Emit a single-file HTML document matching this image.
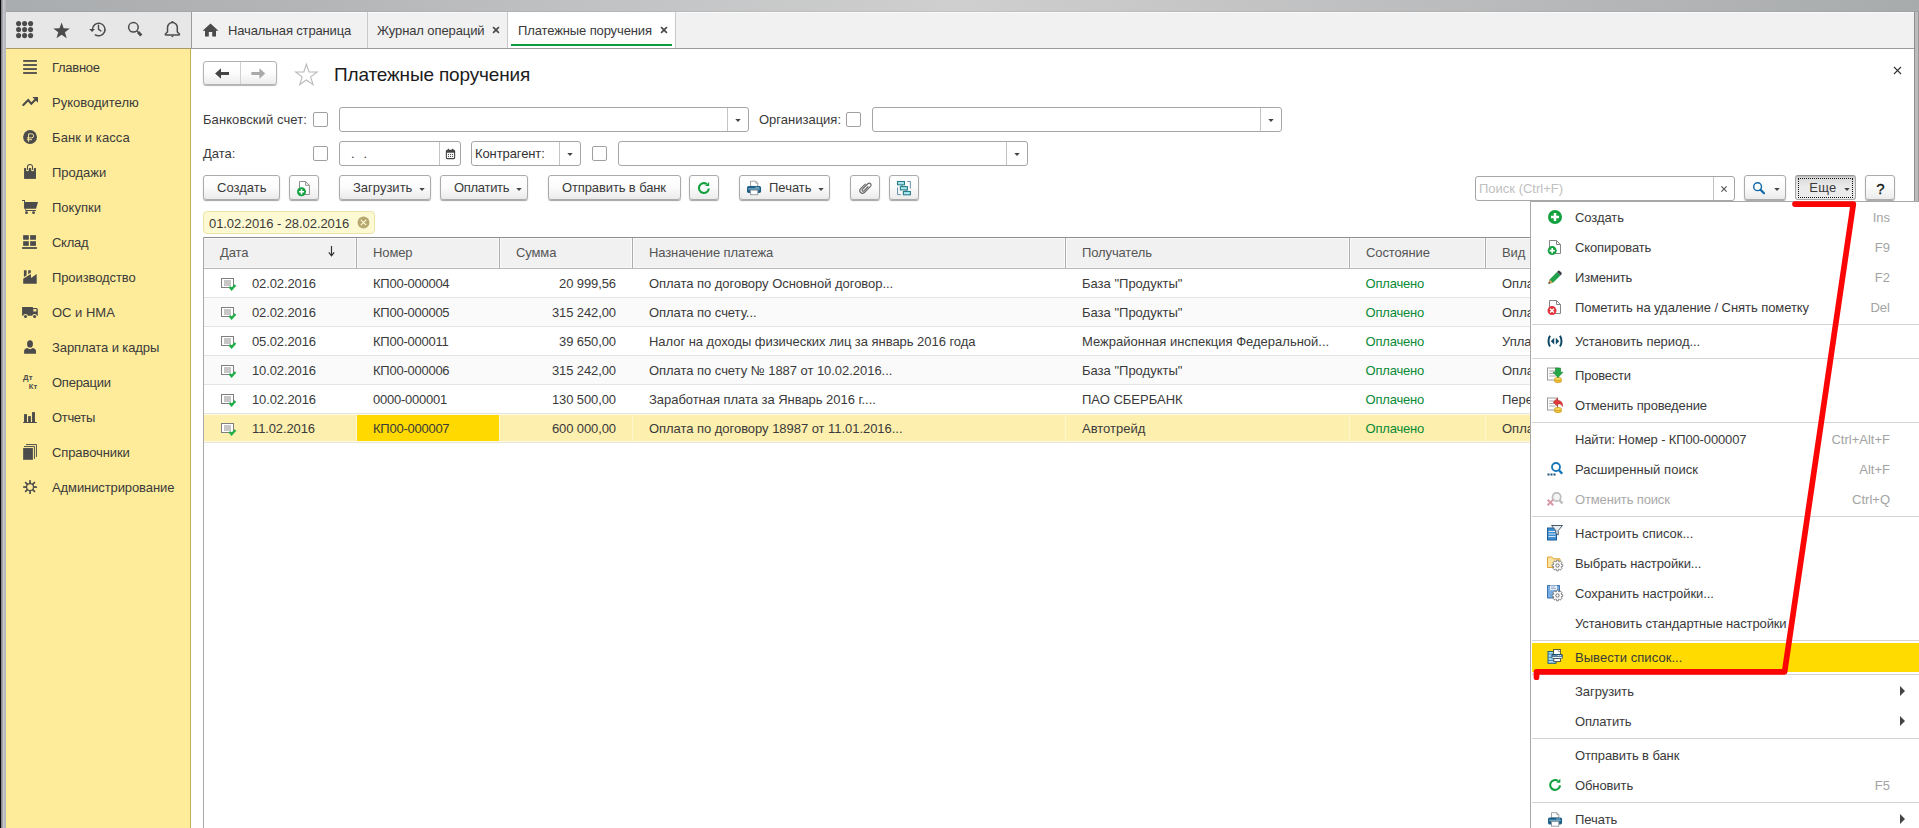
<!DOCTYPE html>
<html lang="ru">
<head>
<meta charset="utf-8">
<title>Платежные поручения</title>
<style>
*{box-sizing:border-box;margin:0;padding:0}
html,body{width:1919px;height:828px;overflow:hidden;background:#fff}
body{font-family:"Liberation Sans",sans-serif;font-size:13px;color:#3a3a3a;position:relative}
.abs{position:absolute}
.t{position:absolute;white-space:nowrap;line-height:18px;height:18px}
#topbar{left:0;top:0;width:1919px;height:12px;background:linear-gradient(90deg,#a9acae 0%,#b3b4b6 15%,#c5c6c7 36%,#cfcfcf 50%,#c9c9ca 58%,#b9babb 78%,#a8abac 100%);border-bottom:1px solid rgba(0,0,0,.06)}
#leftblack{left:0;top:0;width:1px;height:828px;background:#0a0a0a}
#leftgray{left:1px;top:0;width:5px;height:828px;background:linear-gradient(90deg,#77797d 0,#c4c5ca 50%,#b3b3b5 100%)}
#rightgray{left:1914px;top:12px;width:5px;height:190px;background:linear-gradient(90deg,#8e8e8e 0,#8e8e8e 20%,#bcbcbc 20%,#bcbcbc 80%,#9a9a9a 80%)}
#tools{left:6px;top:12px;width:185px;height:36px;background:#e7e7e7}
#tabs{left:191px;top:12px;width:1723px;height:36px;background:#f1f1f1}
#hline{left:6px;top:48px;width:1908px;height:1px;background:#9b9b9b}
#side{left:6px;top:49px;width:184px;height:779px;background:#feec9a}
#sideb{left:190px;top:49px;width:1px;height:779px;background:#c6b155}
.tabsep{top:12px;width:1px;height:36px;background:#c9c9c9}
.tabsep.first{background:#9c9c9c}
.inp{position:absolute;height:25px;border:1px solid #a6a6a6;border-radius:3px;background:#fff}
.inp .sp{position:absolute;top:0;bottom:0;width:1px;background:#c4c4c4}
.arr{position:absolute;width:0;height:0;border-left:2.6px solid transparent;border-right:2.6px solid transparent;border-top:3px solid #444}
.cb{position:absolute;width:15px;height:15px;border:1px solid #a0a0a0;border-radius:2px;background:#fff}
.btn{position:absolute;height:25px;top:175px;border:1px solid #ababab;border-radius:3px;background:linear-gradient(#ffffff 0%,#fbfbfb 50%,#ebebeb 100%);box-shadow:0 1px 1px rgba(0,0,0,.36)}
.btn .t{top:3px}
.hd{position:absolute;top:238px;height:30px;background:#f2f2f2;border-right:1px solid #c8c8c8}
.hd .t{top:7px}
.row{position:absolute;left:204px;width:1327px;height:29px;border-bottom:1px solid #e4e4e4}
.row.alt{background:#fafafa}
.row .t{top:6px}
.grn{color:#0a8a36}
#menu{left:1530px;top:201px;width:400px;height:640px;background:#fff;border-left:1px solid #a8a8a8;border-top:1px solid #a8a8a8}
.mi{position:absolute;left:1575px;line-height:18px;height:18px;white-space:nowrap}
.mk{position:absolute;line-height:18px;height:18px;white-space:nowrap;color:#a3a3a3;text-align:right;width:80px;left:1810px}
.ms{position:absolute;left:1532px;width:387px;height:1px;background:#d4d4d4}
.sub{position:absolute;left:1900px;width:0;height:0;border-top:5px solid transparent;border-bottom:5px solid transparent;border-left:5px solid #444}

#hline2{left:6px;top:48px;width:185px;height:1px;background:#a8996a}
#tabs{border-top:1px solid #fafafa}

</style>
</head>
<body>

<div class="abs" id="topbar"></div>
<div class="abs" id="tools"></div>
<div class="abs" id="tabs"></div>
<div class="abs" id="side"></div>
<div class="abs" id="sideb"></div>
<div class="abs" id="hline"></div>
<div class="abs" id="hline2"></div>
<div class="abs" id="rightgray"></div>
<div class="abs" id="leftgray"></div>
<div class="abs" id="leftblack"></div>

<svg class="abs" style="left:16px;top:21px" width="18" height="18" viewBox="0 0 18 18" ><g fill="#4b4b4b"><circle cx="2.6" cy="2.6" r="2.55"/><circle cx="2.6" cy="8.6" r="2.55"/><circle cx="2.6" cy="14.6" r="2.55"/><circle cx="8.6" cy="2.6" r="2.55"/><circle cx="8.6" cy="8.6" r="2.55"/><circle cx="8.6" cy="14.6" r="2.55"/><circle cx="14.6" cy="2.6" r="2.55"/><circle cx="14.6" cy="8.6" r="2.55"/><circle cx="14.6" cy="14.6" r="2.55"/></g></svg>
<svg class="abs" style="left:52px;top:21px" width="20" height="20" viewBox="0 0 20 20" ><polygon points="9.60,1.50 11.66,7.37 17.87,7.51 12.93,11.28 14.71,17.24 9.60,13.70 4.49,17.24 6.27,11.28 1.33,7.51 7.54,7.37" fill="#4b4b4b"/></svg>
<svg class="abs" style="left:88px;top:20px" width="20" height="20" viewBox="0 0 20 20" ><g fill="none" stroke="#4b4b4b" stroke-width="1.45">
<path d="M4.4 9.5 A6.3 6.3 0 1 1 6.9 14.55"/>
<path d="M10.5 5.3 V9.4 L12.9 10.9" stroke-width="1.4" stroke-linecap="round"/></g>
<polygon points="1.2,9 7,9 4.1,12" fill="#4b4b4b"/></svg>
<svg class="abs" style="left:126px;top:20px" width="20" height="20" viewBox="0 0 20 20" ><circle cx="7.4" cy="7.3" r="4.8" fill="none" stroke="#4b4b4b" stroke-width="1.5"/>
<path d="M11 10.9 L12 11.9" stroke="#4b4b4b" stroke-width="1.4"/>
<path d="M12 11.9 L15.3 15.4" stroke="#4b4b4b" stroke-width="2.9" stroke-linecap="butt"/></svg>
<svg class="abs" style="left:163px;top:19px" width="20" height="21" viewBox="0 0 20 21" ><path d="M4.5 13 V8.5 A4.9 5 0 0 1 14.3 8.5 V13 L16.2 14.7 Q16.9 16 15.6 16 H3.2 Q1.9 16 2.6 14.7 Z" fill="none" stroke="#4b4b4b" stroke-width="1.5" stroke-linejoin="round"/>
<circle cx="9.4" cy="3" r="1.1" fill="#4b4b4b"/>
<path d="M7.9 16.7 H10.9 L9.4 18.5 Z" fill="#4b4b4b"/></svg>
<div class="abs tabsep first" style="left:191px"></div>
<div class="abs tabsep" style="left:367px"></div>
<div class="abs tabsep" style="left:507px"></div>
<div class="abs tabsep" style="left:675px"></div>
<div class="abs" style="left:508px;top:12px;width:167px;height:36px;background:#fff"></div>
<div class="abs" style="left:511px;top:44px;width:161px;height:2px;background:#0e9b3e"></div>
<svg class="abs" style="left:202px;top:23px" width="17" height="14" viewBox="0 0 17 14" ><path d="M8.5 0.6 L0.6 7.8 H3 V13.4 H6.8 V9 H10.2 V13.4 H14 V7.8 H16.4 Z" fill="#4b4b4b"/></svg>
<div class="t" style="left:228px;top:22px;letter-spacing:-0.15px">Начальная страница</div>
<div class="t" style="left:377px;top:22px;letter-spacing:-0.1px">Журнал операций</div>
<div class="t" style="left:518px;top:22px;letter-spacing:-0.12px">Платежные поручения</div>
<svg class="abs" style="left:490.5px;top:24.5px" width="10" height="10" viewBox="0 0 10 10" ><path d="M2.1 2.1 L7.9 7.9 M7.9 2.1 L2.1 7.9" stroke="#4b4b4b" stroke-width="1.7" fill="none"/></svg>
<svg class="abs" style="left:658.5px;top:24.5px" width="10" height="10" viewBox="0 0 10 10" ><path d="M2.1 2.1 L7.9 7.9 M7.9 2.1 L2.1 7.9" stroke="#4b4b4b" stroke-width="1.7" fill="none"/></svg>
<div class="t" style="left:52px;top:59px;letter-spacing:-0.28px">Главное</div>
<div class="t" style="left:52px;top:94px;letter-spacing:0px">Руководителю</div>
<div class="t" style="left:52px;top:129px;letter-spacing:0.1px">Банк и касса</div>
<div class="t" style="left:52px;top:164px;letter-spacing:0px">Продажи</div>
<div class="t" style="left:52px;top:199px;letter-spacing:0px">Покупки</div>
<div class="t" style="left:52px;top:234px;letter-spacing:-0.28px">Склад</div>
<div class="t" style="left:52px;top:269px;letter-spacing:-0.1px">Производство</div>
<div class="t" style="left:52px;top:304px;letter-spacing:0px">ОС и НМА</div>
<div class="t" style="left:52px;top:339px;letter-spacing:-0.1px">Зарплата и кадры</div>
<div class="t" style="left:52px;top:374px;letter-spacing:-0.25px">Операции</div>
<div class="t" style="left:52px;top:409px;letter-spacing:-0.33px">Отчеты</div>
<div class="t" style="left:52px;top:444px;letter-spacing:-0.1px">Справочники</div>
<div class="t" style="left:52px;top:479px;letter-spacing:-0.1px">Администрирование</div>
<svg class="abs" style="left:21px;top:58px" width="18" height="18" viewBox="0 0 18 18" overflow="visible"><g fill="#4b4b4b"><rect x="2.15" y="2.05" width="13.75" height="1.8"/><rect x="2.15" y="6.1" width="13.75" height="1.8"/><rect x="2.15" y="10.15" width="13.75" height="1.8"/><rect x="2.15" y="14.1" width="13.75" height="1.8"/></g></svg>
<svg class="abs" style="left:21px;top:93px" width="18" height="18" viewBox="0 0 18 18" overflow="visible"><path d="M2.3 12 L7.2 7.1 L10.3 10.8 L14.6 6.6" fill="none" stroke="#4b4b4b" stroke-width="2.1" stroke-linecap="round"/><polygon points="11.4,4.1 17,4.1 17,9.8" fill="#4b4b4b"/></svg>
<svg class="abs" style="left:21px;top:128px" width="18" height="18" viewBox="0 0 18 18" overflow="visible"><circle cx="9.05" cy="9.05" r="6.95" fill="#4b4b4b"/><path d="M7.6 13.8 V5.85 H10.6 A2 2 0 0 1 10.6 9.85 H5.9 M5.9 11.7 H11" fill="none" stroke="#feec9a" stroke-width="0.95"/></svg>
<svg class="abs" style="left:21px;top:163px" width="18" height="18" viewBox="0 0 18 18" overflow="visible"><rect x="3.06" y="5.05" width="11.9" height="10.85" fill="#4b4b4b"/><path d="M6.45 4.6 V6.9 M11.55 4.6 V6.9" stroke="#feec9a" stroke-width="2.7" stroke-linecap="round"/><path d="M6.45 7 V3.9 A2.55 2.4 0 0 1 11.55 3.9 V7" fill="none" stroke="#4b4b4b" stroke-width="1.05"/></svg>
<svg class="abs" style="left:21px;top:198px" width="18" height="18" viewBox="0 0 18 18" overflow="visible"><path d="M1.1 2 H4 V3.95 H17 L15 10.7 H3.06 V3 H1.1 Z" fill="#4b4b4b"/><path d="M4.3 10.7 H5.1 V12 H14.9 V12.9 H4.3 Z" fill="#4b4b4b"/><circle cx="5.5" cy="14.7" r="1.4" fill="#4b4b4b"/><circle cx="12.55" cy="14.7" r="1.4" fill="#4b4b4b"/></svg>
<svg class="abs" style="left:21px;top:233px" width="18" height="18" viewBox="0 0 18 18" overflow="visible"><g fill="#4b4b4b"><rect x="2.15" y="2.15" width="5.65" height="4.6"/><rect x="9.15" y="2.15" width="5.8" height="4.6"/><rect x="2.15" y="8.2" width="5.65" height="4.65"/><rect x="9.15" y="8.2" width="5.8" height="4.65"/><rect x="1.07" y="14.1" width="14.85" height="1.8"/></g></svg>
<svg class="abs" style="left:21px;top:268px" width="18" height="18" viewBox="0 0 18 18" overflow="visible"><path d="M2.2 15.7 V10.8 L9.8 6.1 L10.1 9.9 L15.7 5.9 V15.7 Z M2.9 2.2 H5.6 V7.2 L2.9 8.9 Z M7.2 2.2 H9.9 V4.5 L7.2 6.2 Z" fill="#4b4b4b"/></svg>
<svg class="abs" style="left:21px;top:303px" width="18" height="18" viewBox="0 0 18 18" overflow="visible"><path d="M1.1 4 H11.9 V5 H15.4 Q16.8 5 16.8 6.6 V12.7 H1.1 Z" fill="#4b4b4b"/><rect x="12.3" y="6.1" width="3.1" height="2.4" fill="#feec9a"/><circle cx="4.5" cy="13.4" r="2.4" fill="#feec9a"/><circle cx="13.6" cy="13.4" r="2.4" fill="#feec9a"/><circle cx="4.5" cy="13.4" r="1.5" fill="#4b4b4b"/><circle cx="13.6" cy="13.4" r="1.5" fill="#4b4b4b"/></svg>
<svg class="abs" style="left:21px;top:338px" width="18" height="18" viewBox="0 0 18 18" overflow="visible"><ellipse cx="9" cy="5.9" rx="2.95" ry="3.7" fill="#4b4b4b"/><path d="M3.1 15.7 V13.2 Q3.1 10.8 6.2 10.1 Q9 12.2 11.8 10.1 Q15 10.8 15 13.2 V15.7 Z" fill="#4b4b4b"/></svg>
<svg class="abs" style="left:21px;top:373px" width="18" height="18" viewBox="0 0 18 18" overflow="visible"><text x="2.1" y="7" font-family="Liberation Sans" font-size="7.8" font-weight="bold" fill="#4b4b4b">Дт</text><text x="7.8" y="15.5" font-family="Liberation Sans" font-size="7.6" font-weight="bold" fill="#4b4b4b">Кт</text></svg>
<svg class="abs" style="left:21px;top:408px" width="18" height="18" viewBox="0 0 18 18" overflow="visible"><g fill="#4b4b4b"><rect x="3.05" y="6.1" width="2.9" height="8.2"/><rect x="7.1" y="8.1" width="2.8" height="6.2"/><rect x="11.05" y="4.1" width="2.9" height="10.2"/><rect x="2.15" y="14" width="13.75" height="1"/></g></svg>
<svg class="abs" style="left:21px;top:443px" width="18" height="18" viewBox="0 0 18 18" overflow="visible"><path d="M5.05 1.55 H15.45 V13.9" fill="none" stroke="#4b4b4b" stroke-width="0.95"/><path d="M3.06 3.55 H13.45 V15.9" fill="none" stroke="#4b4b4b" stroke-width="0.95"/><rect x="2.15" y="5.05" width="9.75" height="11.75" fill="#4b4b4b"/></svg>
<svg class="abs" style="left:21px;top:478px" width="18" height="18" viewBox="0 0 18 18" overflow="visible"><rect x="8.2" y="2.15" width="1.7" height="13.8" transform="rotate(0 9.05 9.05)" fill="#4b4b4b"/><rect x="8.2" y="2.15" width="1.7" height="13.8" transform="rotate(45 9.05 9.05)" fill="#4b4b4b"/><rect x="8.2" y="2.15" width="1.7" height="13.8" transform="rotate(90 9.05 9.05)" fill="#4b4b4b"/><rect x="8.2" y="2.15" width="1.7" height="13.8" transform="rotate(135 9.05 9.05)" fill="#4b4b4b"/><circle cx="9.05" cy="9.05" r="4.1" fill="#4b4b4b"/><circle cx="9.05" cy="9.05" r="2.85" fill="#feec9a"/></svg>
<div class="abs" style="left:203px;top:61px;width:74px;height:24px;border:1px solid #b3b3b3;border-radius:3px;background:linear-gradient(#fff,#fdfdfd 50%,#ececec);box-shadow:0 1px 1px rgba(0,0,0,.3)"></div>
<div class="abs" style="left:240px;top:62px;width:1px;height:22px;background:#d0d0d0"></div>
<svg class="abs" style="left:215px;top:68.0px" width="15" height="11" viewBox="0 -0.5 15 11" ><path d="M14 3.6 H6 V-0.2 L0.1 5 L6 10.2 V6.6 H14 Z" fill="#454545"/></svg>
<svg class="abs" style="left:251px;top:68.0px" width="15" height="11" viewBox="0 -0.5 15 11" ><path d="M14 3.6 H6 V-0.2 L0.1 5 L6 10.2 V6.6 H14 Z" fill="#a9a9a9" transform="translate(14.4 0) scale(-1 1)"/></svg>
<svg class="abs" style="left:293px;top:62px" width="27" height="25" viewBox="0 0 27 25" ><polygon points="13.40,2.20 16.02,9.90 24.15,10.01 17.63,14.88 20.04,22.64 13.40,17.95 6.76,22.64 9.17,14.88 2.65,10.01 10.78,9.90" fill="#fff" stroke="#b9b9b9" stroke-width="1.1" stroke-linejoin="miter"/></svg>
<div class="t" style="left:334px;top:63px;font-size:19px;line-height:24px;height:24px;color:#1c1c1c;letter-spacing:-0.15px">Платежные поручения</div>
<svg class="abs" style="left:1892px;top:65px" width="11" height="11" viewBox="0 0 11 11" ><path d="M2 2 L9 9 M9 2 L2 9" stroke="#333" stroke-width="1.1" fill="none"/></svg>
<div class="t" style="left:203px;top:111px;letter-spacing:0.08px">Банковский счет:</div>
<div class="cb" style="left:313px;top:112px"></div>
<div class="inp" style="left:339px;top:107px;width:410px;height:25px"><div class="sp" style="left:387px"></div></div>
<svg class="abs" style="left:733.5px;top:117.5px" width="8" height="5" viewBox="0 0 8 5" ><polygon points="1.3,1 6.7,1 4,3.9" fill="#444"/></svg>
<div class="t" style="left:759px;top:111px">Организация:</div>
<div class="cb" style="left:846px;top:112px"></div>
<div class="inp" style="left:872px;top:107px;width:410px;height:25px"><div class="sp" style="left:387px"></div></div>
<svg class="abs" style="left:1266.5px;top:117.5px" width="8" height="5" viewBox="0 0 8 5" ><polygon points="1.3,1 6.7,1 4,3.9" fill="#444"/></svg>
<div class="t" style="left:203px;top:145px">Дата:</div>
<div class="cb" style="left:313px;top:146px"></div>
<div class="inp" style="left:339px;top:141px;width:122px;height:25px"><div class="sp" style="left:99px"></div></div>
<div class="t" style="left:351px;top:145px;letter-spacing:9px">..</div>
<svg class="abs" style="left:444.5px;top:147.5px" width="11" height="12" viewBox="0 0 12 13" ><rect x="1.5" y="2.5" width="9" height="9" rx="1" fill="#fff" stroke="#444" stroke-width="1.2"/><rect x="1.5" y="2.5" width="9" height="2.6" fill="#444"/><rect x="3" y="0.8" width="1.4" height="2.6" fill="#444"/><rect x="7.6" y="0.8" width="1.4" height="2.6" fill="#444"/><g fill="#555"><rect x="3.2" y="6.4" width="1.2" height="1.2"/><rect x="5.4" y="6.4" width="1.2" height="1.2"/><rect x="7.6" y="6.4" width="1.2" height="1.2"/><rect x="3.2" y="8.6" width="1.2" height="1.2"/><rect x="5.4" y="8.6" width="1.2" height="1.2"/><rect x="7.6" y="8.6" width="1.2" height="1.2"/></g></svg>
<div class="inp" style="left:471px;top:141px;width:110px;height:25px"><div class="sp" style="left:87px"></div></div>
<svg class="abs" style="left:565.5px;top:151.5px" width="8" height="5" viewBox="0 0 8 5" ><polygon points="1.3,1 6.7,1 4,3.9" fill="#444"/></svg>
<div class="t" style="left:475px;top:145px;color:#333;letter-spacing:-0.1px">Контрагент:</div>
<div class="cb" style="left:592px;top:146px"></div>
<div class="inp" style="left:618px;top:141px;width:410px;height:25px"><div class="sp" style="left:387px"></div></div>
<svg class="abs" style="left:1012.5px;top:151.5px" width="8" height="5" viewBox="0 0 8 5" ><polygon points="1.3,1 6.7,1 4,3.9" fill="#444"/></svg>
<div class="btn" style="left:203px;width:77px;"><div class="t" style="left:13px;letter-spacing:0px">Создать</div></div>
<div class="btn" style="left:289px;width:30px;"></div>
<div class="btn" style="left:339px;width:92px;"><div class="t" style="left:13px;letter-spacing:0px">Загрузить</div></div>
<svg class="abs" style="left:417.5px;top:186.5px" width="8" height="5" viewBox="0 0 8 5" ><polygon points="1.3,1 6.7,1 4,3.9" fill="#444"/></svg>
<div class="btn" style="left:440px;width:88px;"><div class="t" style="left:13px;letter-spacing:-0.3px">Оплатить</div></div>
<svg class="abs" style="left:514.5px;top:186.5px" width="8" height="5" viewBox="0 0 8 5" ><polygon points="1.3,1 6.7,1 4,3.9" fill="#444"/></svg>
<div class="btn" style="left:548px;width:133px;"><div class="t" style="left:13px;letter-spacing:-0.12px">Отправить в банк</div></div>
<div class="btn" style="left:689px;width:30px;"></div>
<div class="btn" style="left:739px;width:91px;"><div class="t" style="left:29px;letter-spacing:0px">Печать</div></div>
<svg class="abs" style="left:816.5px;top:186.5px" width="8" height="5" viewBox="0 0 8 5" ><polygon points="1.3,1 6.7,1 4,3.9" fill="#444"/></svg>
<div class="btn" style="left:850px;width:30px;"></div>
<div class="btn" style="left:889px;width:30px;"></div>
<div class="inp" style="left:1475px;top:176px;width:260px;height:25px"><div class="sp" style="left:237px"></div></div>
<div class="t" style="left:1479px;top:180px;color:#c0c0c0">Поиск (Ctrl+F)</div>
<svg class="abs" style="left:1718.5px;top:183.5px" width="10" height="10" viewBox="0 0 10 10" ><path d="M2.4 2.4 L7.6 7.6 M7.6 2.4 L2.4 7.6" stroke="#555" stroke-width="1.2" fill="none"/></svg>
<div class="btn" style="left:1744px;width:42px;"></div>
<svg class="abs" style="left:1772.5px;top:186.5px" width="8" height="5" viewBox="0 0 8 5" ><polygon points="1.3,1 6.7,1 4,3.9" fill="#444"/></svg>
<div class="btn" style="left:1795px;width:61px;background:linear-gradient(#d6d6d6,#eaeaea 45%,#ececec);border-color:#a6a6a6;border-top-color:#969696;box-shadow:inset 0 1px 1px rgba(0,0,0,.12)"><div class="t" style="left:13.299999999999955px;letter-spacing:0.3px">Еще</div></div>
<svg class="abs" style="left:1842.5px;top:186.5px" width="8" height="5" viewBox="0 0 8 5" ><polygon points="1.3,1 6.7,1 4,3.9" fill="#444"/></svg>
<div class="abs" style="left:1798px;top:178px;width:55px;height:20px;border:1px dotted #111"></div>
<div class="btn" style="left:1865px;width:30px;"></div>
<div class="t" style="left:1876.2px;top:180px;font-size:15px;color:#111;-webkit-text-stroke:0.3px #111">?</div>
<div class="abs" style="left:203px;top:211px;width:172px;height:23px;background:#fdf9d2;border:1px solid #ebe3aa;border-radius:4px"></div>
<div class="t" style="left:209px;top:215px;letter-spacing:-0.07px">01.02.2016 - 28.02.2016</div>
<svg class="abs" style="left:356.6px;top:215.6px" width="13" height="13" viewBox="0 0 13 13" ><circle cx="6.5" cy="6.5" r="5.9" fill="#b7a771"/><path d="M3.8 3.8 L9.2 9.2 M9.2 3.8 L3.8 9.2" stroke="#fdf9d2" stroke-width="1.2"/></svg>
<svg class="abs" style="left:296px;top:180px" width="16" height="17" viewBox="0 0 16 17" ><path d="M3.5 1.5 H9.6 L13.4 5.3 V14.5 H3.5 Z" fill="#fff" stroke="#8e8e8e" stroke-width="1"/><path d="M9.6 1.5 V5.3 H13.4" fill="none" stroke="#8e8e8e" stroke-width="1"/><circle cx="5.5" cy="11.8" r="4.5" fill="#12a13f"/><path d="M2.9 11.8 H8.1 M5.5 9.2 V14.4" stroke="#fff" stroke-width="1.5"/></svg>
<svg class="abs" style="left:696px;top:180px" width="17" height="18" viewBox="0 0 17 18" ><path d="M10.74 3.99 A4.95 4.95 0 1 0 12.83 8.47" fill="none" stroke="#12a03e" stroke-width="2.1"/><polygon points="13.1,1.9 13.1,5.9 9.1,5.9" fill="#12a03e"/></svg>
<svg class="abs" style="left:746px;top:180px" width="17" height="16" viewBox="0 0 17 16" ><path d="M4.5 1.2 H9.8 L11.8 3.2 V6.4 H4.5 Z" fill="#fff" stroke="#9a9a9a" stroke-width="0.9"/><path d="M9.8 1.2 V3.2 H11.8" fill="none" stroke="#9a9a9a" stroke-width="0.8"/><rect x="1" y="6.1" width="14.05" height="6.8" rx="1.6" fill="#1f5f86"/><rect x="2.2" y="8.2" width="11.6" height="1.4" fill="#6fa8c8"/><rect x="9.6" y="6.9" width="1" height="1" fill="#d9ecf7"/><rect x="11.6" y="6.9" width="1" height="1" fill="#d9ecf7"/><rect x="4.5" y="10.1" width="7.3" height="4.6" fill="#fff" stroke="#8e979c" stroke-width="0.9"/></svg>
<svg class="abs" style="left:857px;top:180px" width="16" height="16" viewBox="0 0 16 16" ><g transform="rotate(45 8 8)"><path d="M5.4 5 V11.6 A2.7 2.7 0 0 0 10.8 11.6 V3 A1.9 1.9 0 0 0 7 3 V10.8 A1.1 1.1 0 0 0 9.2 10.8 V5" fill="none" stroke="#6a6a6a" stroke-width="1.15" stroke-linecap="round"/></g></svg>
<svg class="abs" style="left:896px;top:180px" width="17" height="16" viewBox="0 0 17 16" ><path d="M6 4.8 V6.6 M10 9.8 V11.6" stroke="#2a7f86" stroke-width="1"/><g fill="#a9e6ee" stroke="#2a7f86" stroke-width="1.1"><rect x="1.5" y="1.5" width="7" height="3.3"/><rect x="4.4" y="6.6" width="7" height="3.3"/><rect x="7.4" y="11.5" width="7" height="3.3"/></g><path d="M11.2 1.5 H14.4 V8.6 M1.5 7.4 V14.6 H4.8" fill="none" stroke="#5b88a6" stroke-width="0.9"/></svg>
<svg class="abs" style="left:1752px;top:181px" width="15" height="14" viewBox="0 0 15 14" ><circle cx="5.6" cy="5.7" r="3.9" fill="#fff" stroke="#0f66a5" stroke-width="1.45"/><path d="M8.5 8.7 L12 12.2" stroke="#0f66a5" stroke-width="2.1" stroke-linecap="round"/></svg>
<div class="abs" style="left:203px;top:237px;width:1329px;height:1px;background:#8e8e8e"></div>
<div class="abs" style="left:203px;top:237px;width:1px;height:591px;background:#a9a9a9"></div>
<div class="abs" style="left:204px;top:238px;width:1327px;height:31px;background:#f1f1f1;border-bottom:1px solid #b9b9b9;box-shadow:inset 0 1px 0 #fafafa,inset 0 -1px 0 #f8f8f8"></div>
<div class="abs" style="left:355px;top:238px;width:1px;height:30px;background:#fbfbfb"></div>
<div class="abs" style="left:356px;top:238px;width:1px;height:30px;background:#adadad"></div>
<div class="abs" style="left:357px;top:238px;width:1px;height:30px;background:#fbfbfb"></div>
<div class="abs" style="left:498px;top:238px;width:1px;height:30px;background:#fbfbfb"></div>
<div class="abs" style="left:499px;top:238px;width:1px;height:30px;background:#adadad"></div>
<div class="abs" style="left:500px;top:238px;width:1px;height:30px;background:#fbfbfb"></div>
<div class="abs" style="left:631px;top:238px;width:1px;height:30px;background:#fbfbfb"></div>
<div class="abs" style="left:632px;top:238px;width:1px;height:30px;background:#adadad"></div>
<div class="abs" style="left:633px;top:238px;width:1px;height:30px;background:#fbfbfb"></div>
<div class="abs" style="left:1064px;top:238px;width:1px;height:30px;background:#fbfbfb"></div>
<div class="abs" style="left:1065px;top:238px;width:1px;height:30px;background:#adadad"></div>
<div class="abs" style="left:1066px;top:238px;width:1px;height:30px;background:#fbfbfb"></div>
<div class="abs" style="left:1348px;top:238px;width:1px;height:30px;background:#fbfbfb"></div>
<div class="abs" style="left:1349px;top:238px;width:1px;height:30px;background:#adadad"></div>
<div class="abs" style="left:1350px;top:238px;width:1px;height:30px;background:#fbfbfb"></div>
<div class="abs" style="left:1484px;top:238px;width:1px;height:30px;background:#fbfbfb"></div>
<div class="abs" style="left:1485px;top:238px;width:1px;height:30px;background:#adadad"></div>
<div class="abs" style="left:1486px;top:238px;width:1px;height:30px;background:#fbfbfb"></div>
<div class="t" style="left:220px;top:244px;color:#555;letter-spacing:-0.12px">Дата</div>
<div class="t" style="left:373px;top:244px;color:#555;letter-spacing:-0.12px">Номер</div>
<div class="t" style="left:516px;top:244px;color:#555;letter-spacing:-0.12px">Сумма</div>
<div class="t" style="left:649px;top:244px;color:#555;letter-spacing:-0.12px">Назначение платежа</div>
<div class="t" style="left:1082px;top:244px;color:#555;letter-spacing:-0.12px">Получатель</div>
<div class="t" style="left:1366px;top:244px;color:#555;letter-spacing:-0.12px">Состояние</div>
<div class="t" style="left:1502px;top:244px;color:#555;letter-spacing:-0.12px">Вид</div>
<svg class="abs" style="left:327px;top:245px" width="9" height="12" viewBox="0 0 9 12" ><path d="M4.5 1 V10.5 M1.8 7.4 L4.5 10.8 L7.2 7.4" fill="none" stroke="#333" stroke-width="1.2"/></svg>
<div class="row" style="top:269px;"><div class="t" style="left:48px;letter-spacing:-0.12px">02.02.2016</div><div class="t" style="left:169px;letter-spacing:-0.25px">КП00-000004</div><div class="t" style="left:312px;width:100px;text-align:right;letter-spacing:-0.1px">20 999,56</div><div class="t" style="left:445px;letter-spacing:-0.04px">Оплата по договору Основной договор...</div><div class="t" style="left:878px">База "Продукты"</div><div class="t grn" style="left:1161.5px;letter-spacing:-0.2px">Оплачено</div><div class="t" style="left:1298px">Опла</div></div>
<svg class="abs" style="left:221px;top:277px" width="16" height="14" viewBox="0 0 16 14" ><rect x="0.5" y="1.5" width="12" height="9" fill="#fff" stroke="#7f7f7f" stroke-width="1"/>
<path d="M3 4 H10 M3 6 H10 M3 8 H10" stroke="#8e8e8e" stroke-width="1"/>
<path d="M8.4 9.8 L10.6 12.2 L14.4 8" fill="none" stroke="#1fae47" stroke-width="2.3"/></svg>
<div class="row alt" style="top:298px;"><div class="t" style="left:48px;letter-spacing:-0.12px">02.02.2016</div><div class="t" style="left:169px;letter-spacing:-0.25px">КП00-000005</div><div class="t" style="left:312px;width:100px;text-align:right;letter-spacing:-0.1px">315 242,00</div><div class="t" style="left:445px;letter-spacing:-0.04px">Оплата по счету...</div><div class="t" style="left:878px">База "Продукты"</div><div class="t grn" style="left:1161.5px;letter-spacing:-0.2px">Оплачено</div><div class="t" style="left:1298px">Опла</div></div>
<svg class="abs" style="left:221px;top:306px" width="16" height="14" viewBox="0 0 16 14" ><rect x="0.5" y="1.5" width="12" height="9" fill="#fff" stroke="#7f7f7f" stroke-width="1"/>
<path d="M3 4 H10 M3 6 H10 M3 8 H10" stroke="#8e8e8e" stroke-width="1"/>
<path d="M8.4 9.8 L10.6 12.2 L14.4 8" fill="none" stroke="#1fae47" stroke-width="2.3"/></svg>
<div class="row" style="top:327px;"><div class="t" style="left:48px;letter-spacing:-0.12px">05.02.2016</div><div class="t" style="left:169px;letter-spacing:-0.25px">КП00-000011</div><div class="t" style="left:312px;width:100px;text-align:right;letter-spacing:-0.1px">39 650,00</div><div class="t" style="left:445px;letter-spacing:-0.04px">Налог на доходы физических лиц за январь 2016 года</div><div class="t" style="left:878px">Межрайонная инспекция Федеральной...</div><div class="t grn" style="left:1161.5px;letter-spacing:-0.2px">Оплачено</div><div class="t" style="left:1298px">Упла</div></div>
<svg class="abs" style="left:221px;top:335px" width="16" height="14" viewBox="0 0 16 14" ><rect x="0.5" y="1.5" width="12" height="9" fill="#fff" stroke="#7f7f7f" stroke-width="1"/>
<path d="M3 4 H10 M3 6 H10 M3 8 H10" stroke="#8e8e8e" stroke-width="1"/>
<path d="M8.4 9.8 L10.6 12.2 L14.4 8" fill="none" stroke="#1fae47" stroke-width="2.3"/></svg>
<div class="row alt" style="top:356px;"><div class="t" style="left:48px;letter-spacing:-0.12px">10.02.2016</div><div class="t" style="left:169px;letter-spacing:-0.25px">КП00-000006</div><div class="t" style="left:312px;width:100px;text-align:right;letter-spacing:-0.1px">315 242,00</div><div class="t" style="left:445px;letter-spacing:-0.04px">Оплата по счету № 1887 от 10.02.2016...</div><div class="t" style="left:878px">База "Продукты"</div><div class="t grn" style="left:1161.5px;letter-spacing:-0.2px">Оплачено</div><div class="t" style="left:1298px">Опла</div></div>
<svg class="abs" style="left:221px;top:364px" width="16" height="14" viewBox="0 0 16 14" ><rect x="0.5" y="1.5" width="12" height="9" fill="#fff" stroke="#7f7f7f" stroke-width="1"/>
<path d="M3 4 H10 M3 6 H10 M3 8 H10" stroke="#8e8e8e" stroke-width="1"/>
<path d="M8.4 9.8 L10.6 12.2 L14.4 8" fill="none" stroke="#1fae47" stroke-width="2.3"/></svg>
<div class="row" style="top:385px;"><div class="t" style="left:48px;letter-spacing:-0.12px">10.02.2016</div><div class="t" style="left:169px;letter-spacing:-0.25px">0000-000001</div><div class="t" style="left:312px;width:100px;text-align:right;letter-spacing:-0.1px">130 500,00</div><div class="t" style="left:445px;letter-spacing:-0.04px">Заработная плата за Январь 2016 г....</div><div class="t" style="left:878px">ПАО СБЕРБАНК</div><div class="t grn" style="left:1161.5px;letter-spacing:-0.2px">Оплачено</div><div class="t" style="left:1298px">Пере</div></div>
<svg class="abs" style="left:221px;top:393px" width="16" height="14" viewBox="0 0 16 14" ><rect x="0.5" y="1.5" width="12" height="9" fill="#fff" stroke="#7f7f7f" stroke-width="1"/>
<path d="M3 4 H10 M3 6 H10 M3 8 H10" stroke="#8e8e8e" stroke-width="1"/>
<path d="M8.4 9.8 L10.6 12.2 L14.4 8" fill="none" stroke="#1fae47" stroke-width="2.3"/></svg>
<div class="row alt" style="top:414px;background:#fdefae;border-bottom-color:#e9e6d8;box-shadow:inset 0 1px 0 #fffae0,inset 0 -1px 0 #fffae0;"><div class="abs" style="left:153px;top:1px;width:142px;height:26px;background:#ffd900"></div><div class="abs" style="left:152px;top:0;width:1px;height:28px;background:#fff6d0"></div><div class="abs" style="left:295px;top:0;width:1px;height:28px;background:#fff6d0"></div><div class="abs" style="left:428px;top:0;width:1px;height:28px;background:#fff6d0"></div><div class="abs" style="left:861px;top:0;width:1px;height:28px;background:#fff6d0"></div><div class="abs" style="left:1145px;top:0;width:1px;height:28px;background:#fff6d0"></div><div class="abs" style="left:1281px;top:0;width:1px;height:28px;background:#fff6d0"></div><div class="t" style="left:48px;letter-spacing:-0.12px">11.02.2016</div><div class="t" style="left:169px;letter-spacing:-0.25px">КП00-000007</div><div class="t" style="left:312px;width:100px;text-align:right;letter-spacing:-0.1px">600 000,00</div><div class="t" style="left:445px;letter-spacing:-0.04px">Оплата по договору 18987 от 11.01.2016...</div><div class="t" style="left:878px">Автотрейд</div><div class="t grn" style="left:1161.5px;letter-spacing:-0.2px">Оплачено</div><div class="t" style="left:1298px">Опла</div></div>
<svg class="abs" style="left:221px;top:422px" width="16" height="14" viewBox="0 0 16 14" ><rect x="0.5" y="1.5" width="12" height="9" fill="#fff" stroke="#7f7f7f" stroke-width="1"/>
<path d="M3 4 H10 M3 6 H10 M3 8 H10" stroke="#8e8e8e" stroke-width="1"/>
<path d="M8.4 9.8 L10.6 12.2 L14.4 8" fill="none" stroke="#1fae47" stroke-width="2.3"/></svg>
<div class="abs" id="menu"></div>
<div class="abs" style="left:1532px;top:643px;width:387px;height:29px;background:#ffdb00"></div>
<div class="mi" style="top:209px;letter-spacing:-0.08px">Создать</div>
<div class="mk" style="top:209px">Ins</div>
<div class="mi" style="top:239px;letter-spacing:-0.13px">Скопировать</div>
<div class="mk" style="top:239px">F9</div>
<div class="mi" style="top:269px;letter-spacing:-0.18px">Изменить</div>
<div class="mk" style="top:269px">F2</div>
<div class="mi" style="top:299px;letter-spacing:-0.065px">Пометить на удаление / Снять пометку</div>
<div class="mk" style="top:299px">Del</div>
<div class="mi" style="top:333px;letter-spacing:-0.04px">Установить период...</div>
<div class="mi" style="top:367px;letter-spacing:-0.2px">Провести</div>
<div class="mi" style="top:397px;letter-spacing:-0.15px">Отменить проведение</div>
<div class="mi" style="top:431px;letter-spacing:-0.14px">Найти: Номер - КП00-000007</div>
<div class="mk" style="top:431px">Ctrl+Alt+F</div>
<div class="mi" style="top:461px;letter-spacing:0.03px">Расширенный поиск</div>
<div class="mk" style="top:461px">Alt+F</div>
<div class="mi" style="top:491px;color:#a9a9a9;letter-spacing:-0.14px">Отменить поиск</div>
<div class="mk" style="top:491px">Ctrl+Q</div>
<div class="mi" style="top:525px;letter-spacing:0px">Настроить список...</div>
<div class="mi" style="top:555px;letter-spacing:-0.1px">Выбрать настройки...</div>
<div class="mi" style="top:585px;letter-spacing:-0.08px">Сохранить настройки...</div>
<div class="mi" style="top:615px;letter-spacing:-0.115px">Установить стандартные настройки</div>
<div class="mi" style="top:649px;letter-spacing:0.05px">Вывести список...</div>
<div class="mi" style="top:683px;letter-spacing:-0.05px">Загрузить</div>
<div class="sub" style="top:686px"></div>
<div class="mi" style="top:713px;letter-spacing:-0.15px">Оплатить</div>
<div class="sub" style="top:716px"></div>
<div class="mi" style="top:747px;letter-spacing:-0.1px">Отправить в банк</div>
<div class="mi" style="top:777px;letter-spacing:-0.1px">Обновить</div>
<div class="mk" style="top:777px">F5</div>
<div class="mi" style="top:811px;letter-spacing:-0.05px">Печать</div>
<div class="sub" style="top:814px"></div>
<div class="ms" style="top:324px"></div>
<div class="ms" style="top:358px"></div>
<div class="ms" style="top:422px"></div>
<div class="ms" style="top:516px"></div>
<div class="ms" style="top:640px"></div>
<div class="ms" style="top:674px"></div>
<div class="ms" style="top:738px"></div>
<div class="ms" style="top:802px"></div>
<svg class="abs" style="left:1546px;top:208px" width="18" height="18" viewBox="0 0 18 18" ><circle cx="9" cy="9" r="7" fill="#12a13f"/><path d="M4.94 9 H13.059999999999999 M9 4.94 V13.059999999999999" stroke="#fff" stroke-width="2.52"/></svg>
<svg class="abs" style="left:1546px;top:238px" width="18" height="18" viewBox="0 0 18 18" ><path d="M3.5 2.5 H10.5 L14.5 6.5 V15.5 H3.5 Z" fill="#fff" stroke="#858585" stroke-width="1"/><path d="M10.5 2.5 V6.5 H14.5" fill="none" stroke="#858585" stroke-width="1"/><circle cx="6.2" cy="12.6" r="4.5" fill="#12a13f"/><path d="M3.5900000000000003 12.6 H8.81 M6.2 9.99 V15.209999999999999" stroke="#fff" stroke-width="1.62"/></svg>
<svg class="abs" style="left:1546px;top:268px" width="18" height="18" viewBox="0 0 18 18" ><g transform="translate(-0.6 0.8)"><path d="M3 15 L4.2 10.6 L11.6 3.2 L15 6.6 L7.6 14 Z" fill="#23a04a"/><path d="M11.6 3.2 L12.8 2 Q13.6 1.4 14.4 2.2 L16 3.8 Q16.8 4.6 16.2 5.4 L15 6.6 Z" fill="#39404a"/><path d="M3 15 L4.2 10.6 L7.6 14 Z" fill="#d9a05a"/><path d="M3 15 L3.6 13 L5 14.4 Z" fill="#333"/></g></svg>
<svg class="abs" style="left:1546px;top:298px" width="18" height="18" viewBox="0 0 18 18" ><path d="M3.5 2.5 H10.5 L14.5 6.5 V15.5 H3.5 Z" fill="#fff" stroke="#858585" stroke-width="1"/><path d="M10.5 2.5 V6.5 H14.5" fill="none" stroke="#858585" stroke-width="1"/><circle cx="6" cy="12.6" r="4.5" fill="#e2323a"/><path d="M4.1 10.7 L7.9 14.5 M7.9 10.7 L4.1 14.5" stroke="#fff" stroke-width="1.5"/></svg>
<svg class="abs" style="left:1546px;top:332px" width="18" height="18" viewBox="0 0 18 18" ><path d="M4 3.8 Q1 9.2 4 14.6 M14 3.8 Q17 9.2 14 14.6" fill="none" stroke="#0d4a66" stroke-width="2"/><path d="M8.2 5.8 L4.8 9.2 L8.2 12.6 Z M9.8 5.8 L13.2 9.2 L9.8 12.6 Z" fill="#0d4a66"/></svg>
<svg class="abs" style="left:1546px;top:366px" width="18" height="18" viewBox="0 0 18 18" ><rect x="1.5" y="2" width="10" height="12" fill="#fff" stroke="#9a9a9a" stroke-width="1"/><path d="M3.2 5 H9.8 M3.2 7.5 H9.8 M3.2 10 H9.8" stroke="#a8a8a8" stroke-width="1"/><ellipse cx="12" cy="15" rx="3.6" ry="1.6" fill="#f3c63a" stroke="#c9971a" stroke-width="0.7"/><ellipse cx="12" cy="13" rx="3.6" ry="1.6" fill="#f7d558" stroke="#c9971a" stroke-width="0.7"/><path d="M9.5 2 H14.5 V6.2 H17 L12 11.4 L7 6.2 H9.5 Z" fill="#22a845" stroke="#11802f" stroke-width="0.6"/></svg>
<svg class="abs" style="left:1546px;top:396px" width="18" height="18" viewBox="0 0 18 18" ><rect x="1.5" y="2" width="10" height="12" fill="#fff" stroke="#9a9a9a" stroke-width="1"/><path d="M3.2 5 H9.8 M3.2 7.5 H9.8 M3.2 10 H9.8" stroke="#a8a8a8" stroke-width="1"/><ellipse cx="12" cy="15" rx="3.6" ry="1.6" fill="#f3c63a" stroke="#c9971a" stroke-width="0.7"/><ellipse cx="12" cy="13" rx="3.6" ry="1.6" fill="#f7d558" stroke="#c9971a" stroke-width="0.7"/><path d="M7.2 6.2 L11.6 2 V4.4 C15.4 4.4 17 7 16.4 10.6 C15.6 8.4 14.2 7.8 11.6 7.8 V10.4 Z" fill="#e23a3a" stroke="#b51f1f" stroke-width="0.5"/></svg>
<svg class="abs" style="left:1546px;top:460px" width="18" height="18" viewBox="0 0 18 18" ><circle cx="10" cy="7" r="4" fill="#fff" stroke="#1777b8" stroke-width="1.8"/><path d="M12.8 10 L16.2 13.8" stroke="#1777b8" stroke-width="2.4"/><rect x="1.5" y="13.5" width="2" height="2" fill="#1a4f7a"/><rect x="4.5" y="13.5" width="2" height="2" fill="#1a4f7a"/><rect x="7.5" y="13.5" width="2" height="2" fill="#1a4f7a"/></svg>
<svg class="abs" style="left:1546px;top:490px" width="18" height="18" viewBox="0 0 18 18" ><circle cx="10.6" cy="7" r="4.2" fill="#f4f4f4" stroke="#bdbdbd" stroke-width="1.7"/><path d="M13.4 10 L16.4 13.6" stroke="#bdbdbd" stroke-width="2.4"/><path d="M1.6 9.6 L7.2 15.2 M7.2 9.6 L1.6 15.2" stroke="#d79aa6" stroke-width="2"/></svg>
<svg class="abs" style="left:1546px;top:524px" width="18" height="18" viewBox="0 0 18 18" ><rect x="1.5" y="4" width="9" height="12" fill="#3f8fd0" stroke="#1c5f9c" stroke-width="1"/><path d="M2.5 7.5 H9.5 M2.5 10 H9.5 M2.5 12.5 H9.5" stroke="#d6e8f7" stroke-width="1"/><path d="M5.5 1.5 H16.5 L12.2 6.6 V11 L9.8 9.4 V6.6 Z" fill="#e9eef2" stroke="#4a5b68" stroke-width="1"/></svg>
<svg class="abs" style="left:1546px;top:554px" width="18" height="18" viewBox="0 0 18 18" ><path d="M1.5 3 H6 L7.5 4.8 H14 V13.5 H1.5 Z" fill="#fbe3a0" stroke="#e3a338" stroke-width="1"/><rect x="10.3" y="6.2" width="2.4" height="10.6" rx="0.6" transform="rotate(0 11.5 11.5)" fill="#fff" stroke="#6f6f6f" stroke-width="0.9"/><rect x="10.3" y="6.2" width="2.4" height="10.6" rx="0.6" transform="rotate(45 11.5 11.5)" fill="#fff" stroke="#6f6f6f" stroke-width="0.9"/><rect x="10.3" y="6.2" width="2.4" height="10.6" rx="0.6" transform="rotate(90 11.5 11.5)" fill="#fff" stroke="#6f6f6f" stroke-width="0.9"/><rect x="10.3" y="6.2" width="2.4" height="10.6" rx="0.6" transform="rotate(135 11.5 11.5)" fill="#fff" stroke="#6f6f6f" stroke-width="0.9"/><circle cx="11.5" cy="11.5" r="3.6" fill="#fff"/><circle cx="11.5" cy="11.5" r="3.9" fill="none" stroke="#6f6f6f" stroke-width="0"/><circle cx="11.5" cy="11.5" r="1.7" fill="#fff" stroke="#6f6f6f" stroke-width="1"/></svg>
<svg class="abs" style="left:1546px;top:584px" width="18" height="18" viewBox="0 0 18 18" ><path d="M1.5 1.5 H13.5 V14 H1.5 Z" fill="#79aee2" stroke="#3a6fae" stroke-width="1"/><rect x="4" y="1.5" width="7" height="4.6" fill="#e9eff6"/><path d="M5 3 H9 M5 4.6 H10" stroke="#8aa6c6" stroke-width="0.8"/><rect x="10.3" y="6.2" width="2.4" height="10.6" rx="0.6" transform="rotate(0 11.5 11.5)" fill="#fff" stroke="#6f6f6f" stroke-width="0.9"/><rect x="10.3" y="6.2" width="2.4" height="10.6" rx="0.6" transform="rotate(45 11.5 11.5)" fill="#fff" stroke="#6f6f6f" stroke-width="0.9"/><rect x="10.3" y="6.2" width="2.4" height="10.6" rx="0.6" transform="rotate(90 11.5 11.5)" fill="#fff" stroke="#6f6f6f" stroke-width="0.9"/><rect x="10.3" y="6.2" width="2.4" height="10.6" rx="0.6" transform="rotate(135 11.5 11.5)" fill="#fff" stroke="#6f6f6f" stroke-width="0.9"/><circle cx="11.5" cy="11.5" r="3.6" fill="#fff"/><circle cx="11.5" cy="11.5" r="3.9" fill="none" stroke="#6f6f6f" stroke-width="0"/><circle cx="11.5" cy="11.5" r="1.7" fill="#fff" stroke="#6f6f6f" stroke-width="1"/></svg>
<svg class="abs" style="left:1546px;top:648px" width="18" height="18" viewBox="0 0 18 18" ><g transform="translate(1.3 1)"><rect x="0.7" y="2.5" width="8" height="11.8" fill="#a9d8f5" stroke="#1f5f78" stroke-width="1"/><path d="M0.7 5 H6 M0.7 8.3 H5 M0.7 11.4 H8.7" stroke="#2f7f9f" stroke-width="0.9"/><rect x="6.3" y="0.5" width="6.8" height="5" fill="#fff" stroke="#4a4a2a" stroke-width="0.9"/><path d="M11 0.5 V2.6 H13.1" fill="none" stroke="#777" stroke-width="0.7"/><rect x="4.2" y="5" width="11.2" height="5" rx="1.3" fill="#1f4f70"/><rect x="5.2" y="6.2" width="9.2" height="1" fill="#6fa0bf"/><rect x="10.4" y="6" width="1" height="1" fill="#fff"/><rect x="12.4" y="6" width="1" height="1" fill="#fff"/><rect x="5" y="7.8" width="9.6" height="1.6" fill="#eef4f8"/><rect x="6.5" y="9.6" width="6.6" height="3" fill="#fff" stroke="#3d4a50" stroke-width="0.9"/></g></svg>
<svg class="abs" style="left:1546px;top:776px" width="18" height="18" viewBox="0 0 18 18" ><g transform="translate(1.2 0.9)"><path d="M10.74 3.99 A4.95 4.95 0 1 0 12.83 8.47" fill="none" stroke="#12a03e" stroke-width="2.1"/><polygon points="13.1,1.9 13.1,5.9 9.1,5.9" fill="#12a03e"/></g></svg>
<svg class="abs" style="left:1546px;top:810px" width="18" height="18" viewBox="0 0 18 18" ><g transform="translate(1 1.5)"><path d="M4.5 1.2 H9.8 L11.8 3.2 V6.4 H4.5 Z" fill="#fff" stroke="#9a9a9a" stroke-width="0.9"/><path d="M9.8 1.2 V3.2 H11.8" fill="none" stroke="#9a9a9a" stroke-width="0.8"/><rect x="1" y="6.1" width="14.05" height="6.8" rx="1.6" fill="#1f5f86"/><rect x="2.2" y="8.2" width="11.6" height="1.4" fill="#6fa8c8"/><rect x="9.6" y="6.9" width="1" height="1" fill="#d9ecf7"/><rect x="11.6" y="6.9" width="1" height="1" fill="#d9ecf7"/><rect x="4.5" y="10.1" width="7.3" height="4.6" fill="#fff" stroke="#8e979c" stroke-width="0.9"/></g></svg>
<svg class="abs" style="left:0;top:0;pointer-events:none" width="1919" height="828" viewBox="0 0 1919 828"><path d="M1795 204.1 H1853.3 L1784.6 671.8 H1536.5 L1536.5 677.2" fill="none" stroke="#fb0505" stroke-width="5.7" stroke-linejoin="round" stroke-linecap="round"/></svg>
</body>
</html>
